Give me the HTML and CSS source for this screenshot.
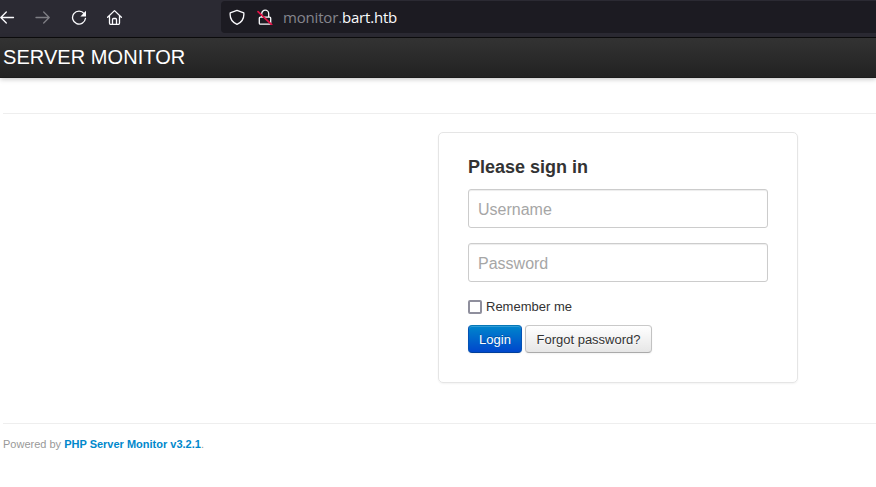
FILE: index.html
```html
<!DOCTYPE html>
<html lang="en">
<head>
<meta charset="utf-8">
<title>SERVER MONITOR</title>
<link rel="stylesheet" href="styles.css">
</head>
<body>
<div class="toolbar">
  <div class="nav-icons">
    <svg class="icon" viewBox="0 0 16 16"><path d="M14.500 8.500H2M7.300 3 1.800 8.500 7.300 14"/></svg>
    <svg class="icon disabled" viewBox="0 0 16 16"><path d="M1 8.500h13M8.700 3l5.500 5.500L8.700 14"/></svg>
    <svg class="icon" viewBox="0 0 16 16"><path d="M13.200 4.600A6.500 6.500 0 1 0 14.500 9.300"/><path class="solid" d="M15 1.800v5.600H9.400z"/></svg>
    <svg class="icon" viewBox="0 0 16 16"><path d="M.6 8.200 7.500 1.600l6.900 6.600M2.500 7.500v6.500q0 1.500 1.500 1.500h7q1.500 0 1.500-1.500V7.500M5.500 15v-4.500q0-1 1-1h2q1 0 1 1V15"/></svg>
  </div>
  <div class="address">
    <svg class="icon" viewBox="0 0 16 16"><path d="M8 1.300 14.800 3.900c.5 5.200-1.600 9.200-6.800 11.500C2.800 13.100.7 9.100 1.200 3.900z"/></svg>
    <svg class="icon lock" viewBox="0 0 16 16"><path d="M4.700 7.500V4.700a3.500 3.500 0 0 1 7 0v2.800M3.300 8.200h9.400q1 0 1 1v5q0 1-1 1H3.300q-1 0-1-1v-5q0-1 1-1z"/><path class="strike" d="M1 2.600 14.700 15.700"/></svg>
    <span class="url">monitor.<b>bart.htb</b></span>
  </div>
</div>
<header class="navbar"><span class="brand">SERVER MONITOR</span></header>
<main class="container">
  <form class="signin">
    <h2>Please sign in</h2>
    <input class="field" type="text" placeholder="Username">
    <input class="field" type="password" placeholder="Password">
    <label class="remember"><input type="checkbox"><span>Remember me</span></label>
    <div class="actions">
      <button class="btn primary" type="button">Login</button>
      <button class="btn" type="button">Forgot password?</button>
    </div>
  </form>
</main>
<footer class="footer">Powered by <a>PHP Server Monitor v3.2.1</a>.</footer>
</body>
</html>
```
FILE: styles.css
```css
* { box-sizing: border-box; }
body {
  margin: 0;
  height: 487px;
  overflow: hidden;
  background: #fff;
  color: #333;
  font: 13px/20px "Liberation Sans", Arial, sans-serif;
}
.toolbar {
  display: flex;
  height: 38px;
  background: #2b2a33;
  border-bottom: 1px solid #0c0c0d;
}
.nav-icons {
  display: flex;
  align-items: center;
  gap: 20px;
  width: 221px;
  padding-bottom: 3px;
  margin-left: -1px;
}
.icon {
  flex: none;
  width: 16px;
  height: 16px;
  fill: none;
  stroke: #fbfbfe;
  stroke-width: 1.3;
  stroke-linecap: round;
  stroke-linejoin: round;
}
.disabled { opacity: .4; }
.solid { fill: #fbfbfe; stroke: none; }
.strike { stroke: #e21145; stroke-width: 1.7; }
.address {
  display: flex;
  flex: 1;
  align-items: center;
  height: 32px;
  margin: 1px -6px 0 1px;
  padding: 0 0 1px 8px;
  background: #1c1b22;
  border-radius: 4px;
}
.lock { margin: 0 10px 0 12px; }
.url {
  color: #85858d;
  font: 15px/20px "Open Sans", "Noto Sans", sans-serif;
  letter-spacing: -.18px;
}
.url b { color: #fbfbfe; font-weight: 400; }
.navbar {
  height: 40px;
  padding-left: 3px;
  background: linear-gradient(#333, #222);
  border-bottom: 1px solid #1c1c1c;
  box-shadow: 0 1px 5px rgba(0, 0, 0, .25);
}
.brand { color: #fff; font-size: 20px; line-height: 38px; letter-spacing: .06px; }
.container {
  display: flex;
  margin: 35px 0 0 3px;
  padding: 18px 0 40px 435px;
  border: solid #eee;
  border-width: 1px 0;
}
.signin {
  width: 360px;
  height: 251px;
  padding: 19px 29px 29px;
  border: 1px solid #e5e5e5;
  border-radius: 5px;
  box-shadow: 0 1px 2px rgba(0, 0, 0, .05);
}
h2 { margin: 0 0 7px; font-size: 18px; line-height: 30px; }
.field {
  display: block;
  width: 300px;
  height: 39px;
  margin: 0 0 15px;
  padding: 9px 9px 7px;
  border: 1px solid #ccc;
  border-radius: 3px;
  box-shadow: inset 0 1px 1px rgba(0, 0, 0, .075);
  font: 16px "Liberation Sans", Arial, sans-serif;
}
.field::placeholder { color: #a6a6a6; opacity: 1; }
.remember { display: flex; align-items: center; gap: 4px; height: 20px; }
.remember input {
  appearance: none;
  width: 14px;
  height: 14px;
  margin: 0;
  border: 2px solid #8f8f9d;
  border-radius: 2px;
  background: #fff;
}
.actions { display: flex; gap: 3px; margin-top: 8px; }
.btn {
  width: 127px;
  height: 28px;
  padding: 2px 0 0;
  border: 1px solid #bbb;
  border-color: #c9c9c9 #c2c2c2 #aaa;
  border-radius: 4px;
  background: linear-gradient(#fff, #e6e6e6);
  box-shadow: inset 0 1px 0 rgba(255, 255, 255, .2), 0 1px 2px rgba(0, 0, 0, .05);
  color: #333;
  font: 13px/20px "Liberation Sans", Arial, sans-serif;
  text-shadow: 0 1px 1px rgba(255, 255, 255, .75);
}
.primary {
  width: 54px;
  border-color: #0577b7 #0452b4 #003f9a;
  background: linear-gradient(#08c, #04c) border-box;
  color: #fff;
  text-shadow: 0 -1px 0 rgba(0, 0, 0, .25);
}
.footer { padding: 10px 3px; color: #999; font-size: 11px; }
.footer a { color: #08c; font-weight: 700; }
```
